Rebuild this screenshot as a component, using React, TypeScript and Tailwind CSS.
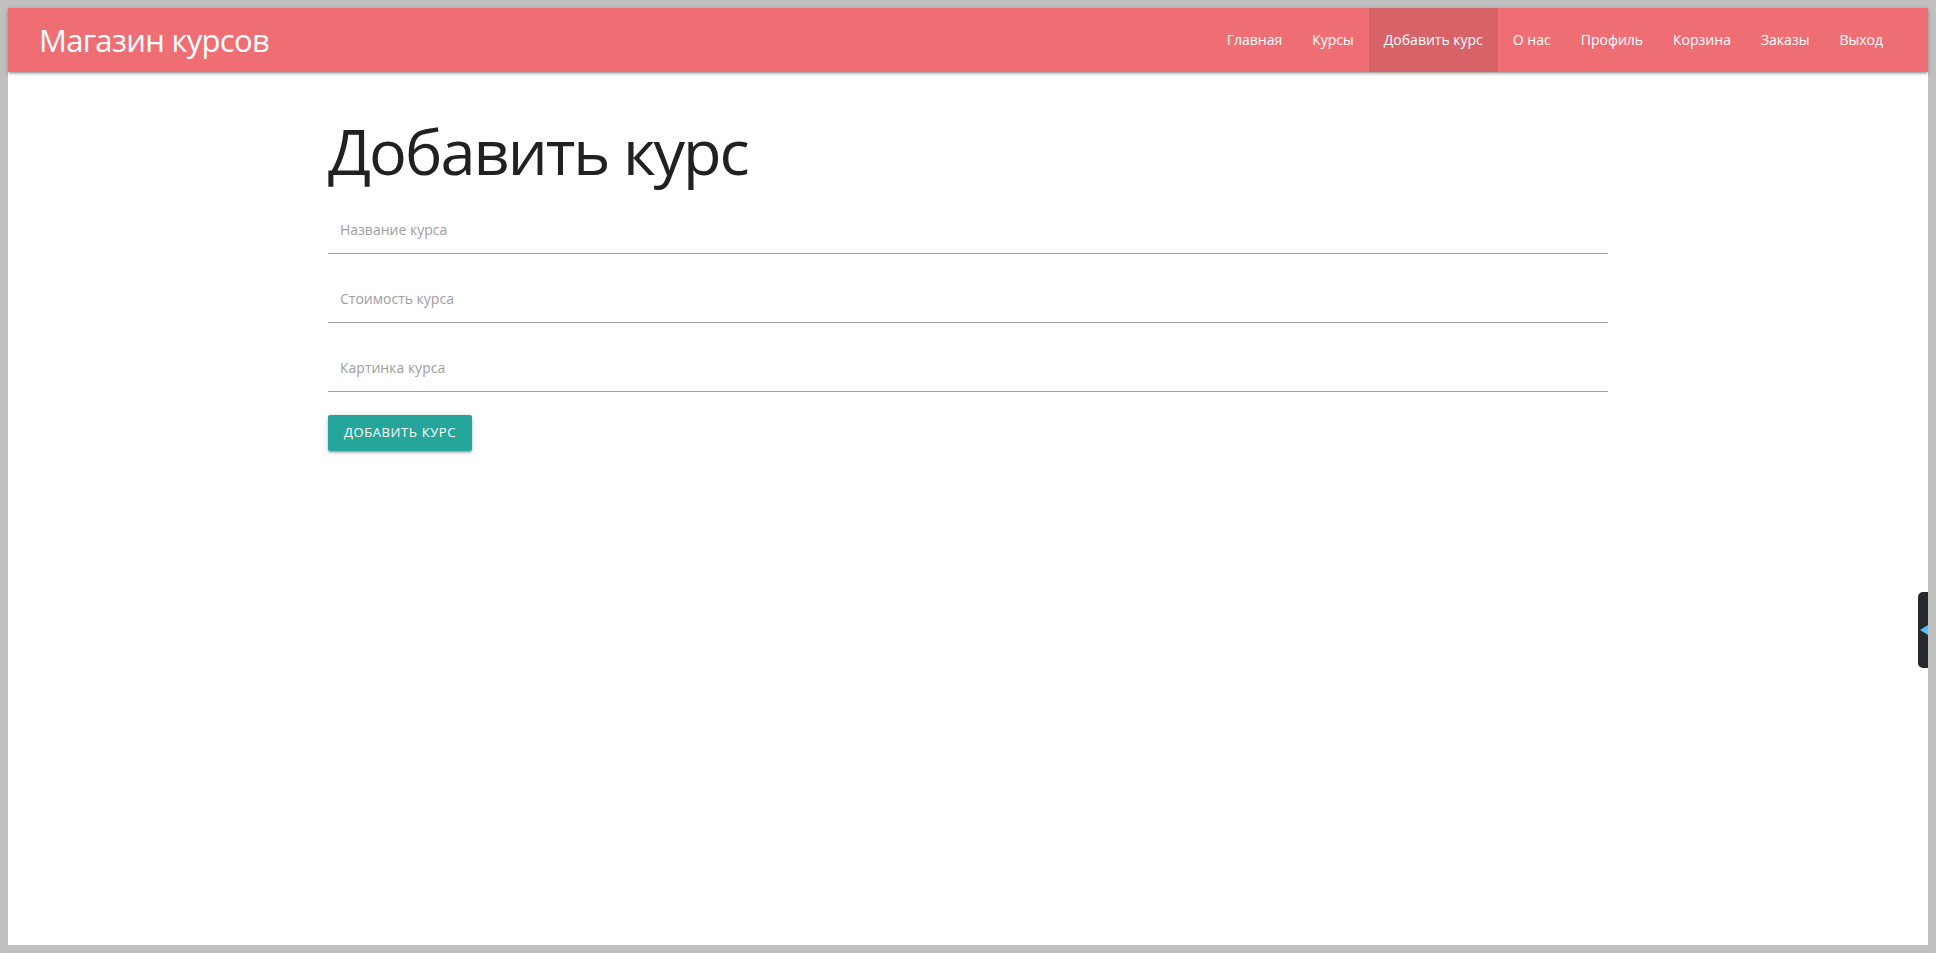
const links = ["Главная", "Курсы", "Добавить курс", "О нас", "Профиль", "Корзина", "Заказы", "Выход"];
const fields = ["Название курса", "Стоимость курса", "Картинка курса"];

export default function App() {
  return (
    <div className="h-[953px] w-full bg-[#c0c0c0] p-2">
      <div className="relative flex h-full flex-col bg-white font-['Open_Sans',sans-serif]">
        {/* navbar */}
        <nav className="flex h-16 shrink-0 items-center justify-between bg-[#ef6e73] pl-[31px] pr-[30px] shadow-[0_2px_2px_0_rgba(0,0,0,0.14),0_3px_1px_-2px_rgba(0,0,0,0.12),0_1px_5px_0_rgba(0,0,0,0.2)]">
          <a href="#" className="text-[31px] leading-[64px] tracking-[-0.7px] text-white">
            Магазин курсов
          </a>
          <ul className="flex h-full">
            {links.map((l) => (
              <li key={l}>
                <a
                  href="#"
                  className={
                    "block px-[15px] text-[14px] leading-[64px] text-white " +
                    (l === "Добавить курс" ? "bg-[#d76368]" : "")
                  }
                >
                  {l}
                </a>
              </li>
            ))}
          </ul>
        </nav>

        {/* form */}
        <main className="mx-auto w-[1280px]">
          <h1 className="mt-[42px] text-[63px] leading-[74px] font-normal tracking-[-2px] text-[#212121]">
            Добавить курс
          </h1>
          <form className="mt-[17px] flex flex-col gap-5" onSubmit={(e) => e.preventDefault()}>
            {fields.map((f) => (
              <input
                key={f}
                type="text"
                placeholder={f}
                className="h-[49px] border-b border-[#9e9e9e] pl-3 text-[14px] text-[#212121] outline-none placeholder:text-[#9e9e9e]"
              />
            ))}
            <div className="mt-[3px]">
              <button
                type="submit"
                className="h-9 rounded-[2px] bg-[#26a69a] px-4 text-[13px] tracking-[0.6px] text-white uppercase shadow-[0_2px_2px_0_rgba(0,0,0,0.14),0_3px_1px_-2px_rgba(0,0,0,0.12),0_1px_5px_0_rgba(0,0,0,0.2)]"
              >
                Добавить курс
              </button>
            </div>
          </form>
        </main>

        {/* side tab of an extension */}
        <div className="absolute right-0 top-[584px] flex h-[76px] w-[10px] items-center rounded-l-[5px] bg-[#25282c]">
          <svg width="8" height="10" viewBox="0 0 8 10" className="ml-[2px]">
            <path d="M0 5 L8 0 L8 10 Z" fill="#4fc3f7" />
          </svg>
        </div>
      </div>
    </div>
  );
}
